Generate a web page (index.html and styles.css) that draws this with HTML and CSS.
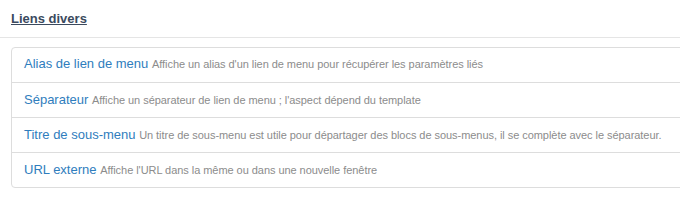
FILE: index.html
```html
<!DOCTYPE html>
<html lang="fr">
<head>
    <meta charset="UTF-8">
    <title>Liens divers</title>
    <link rel="stylesheet" href="styles.css">
</head>
<body>
    <div class="section">
        <h3 class="section-title"><a href="#">Liens divers</a></h3>
        <ul class="type-list">
            <li><a href="#">Alias de lien de menu</a> <small>Affiche un alias d'un lien de menu pour récupérer les paramètres liés</small></li>
            <li><a href="#">Séparateur</a> <small>Affiche un séparateur de lien de menu ; l'aspect dépend du template</small></li>
            <li><a href="#">Titre de sous-menu</a> <small>Un titre de sous-menu est utile pour départager des blocs de sous-menus, il se complète avec le séparateur.</small></li>
            <li><a href="#">URL externe</a> <small>Affiche l'URL dans la même ou dans une nouvelle fenêtre</small></li>
        </ul>
    </div>
</body>
</html>
```

FILE: styles.css
```css
* {
    margin: 0;
    padding: 0;
    box-sizing: border-box;
    font-family: "Liberation Sans", Arial, sans-serif;
}
body, html {
    width: 100%;
    height: 100%;
    overflow: hidden;
    background: white;
}
.section {
    width: 100%;
}
.section-title {
    padding: 10px 11px 9px;
    font-size: 13px;
    line-height: 18px;
    font-weight: bold;
    border-bottom: 1px solid #e5e5e5;
}
.section-title a {
    color: #3b4a5e;
    text-decoration: underline;
}
.type-list {
    list-style: none;
    margin: 9px 0 0 11px;
    width: 700px;
    border: 1px solid #dddddd;
    border-radius: 4px;
}
.type-list li {
    height: 35px;
    padding: 9px 12px 0;
    line-height: 15px;
    font-size: 13px;
    white-space: nowrap;
    border-top: 1px solid #dddddd;
}
.type-list li:first-child {
    height: 34px;
    padding-top: 8px;
    border-top: none;
}
.type-list li a {
    color: #2f7dbd;
    text-decoration: none;
}
.type-list li small {
    font-size: 11px;
    letter-spacing: -0.05px;
    color: #8c8c8c;
}
```
